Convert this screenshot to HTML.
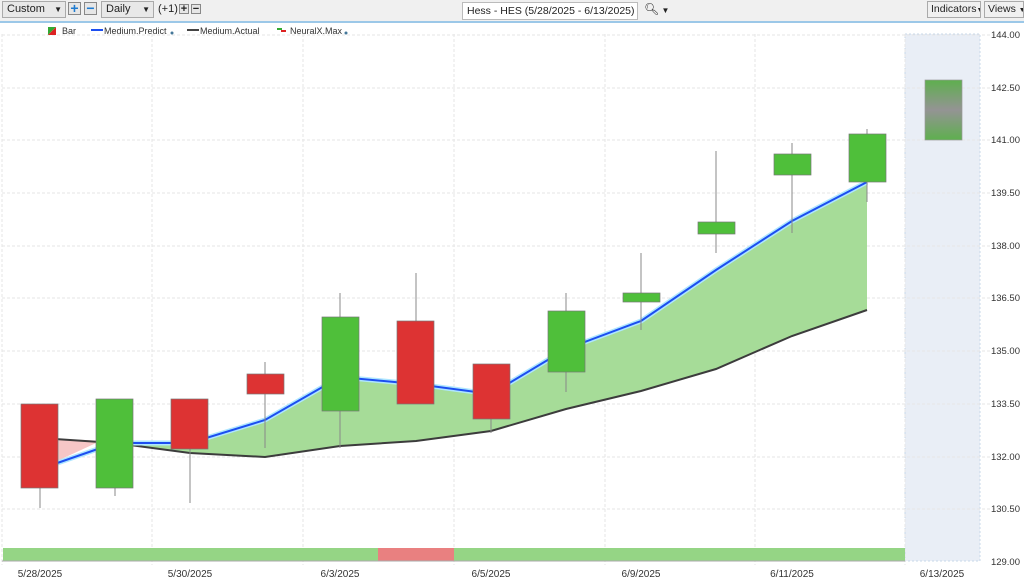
<!DOCTYPE html>
<html><head><meta charset="utf-8"><style>
body{margin:0;width:1024px;height:579px;overflow:hidden;background:#fff;font-family:"Liberation Sans",sans-serif;}
.tb{position:absolute;left:0;top:0;width:1024px;height:21px;background:#f0f0f0;border-bottom:2px solid #9cc8e8;font-size:11px;color:#222;white-space:nowrap}
.box{position:absolute;top:1px;height:17px;border:1px solid #aaa;background:#e8e8e8;line-height:15px;padding-left:4px;box-sizing:border-box;white-space:nowrap;overflow:hidden}
.sq{position:absolute;top:2px;width:13px;height:13px;border:1px solid #888;background:#e6e6e6;box-sizing:border-box;text-align:center;line-height:11px;font-weight:bold}
</style></head><body>
<div class="tb">
<div class="box" style="left:2px;width:64px">Custom<span style="position:absolute;right:3px;font-size:8px">▼</span></div>
<div class="sq" style="left:68px;color:#1e7bd0;font-size:14px">+</div>
<div class="sq" style="left:84px;color:#1e7bd0;font-size:14px">−</div>
<div class="box" style="left:101px;width:53px">Daily<span style="position:absolute;right:3px;font-size:8px">▼</span></div>
<div style="position:absolute;left:158px;top:3px">(+1)</div>
<div class="sq" style="left:179px;width:10px;height:10px;top:4px;line-height:8px;font-size:11px">+</div>
<div class="sq" style="left:191px;width:10px;height:10px;top:4px;line-height:8px;font-size:11px">−</div>
<div style="position:absolute;left:462px;top:2px;width:176px;height:18px;background:#fff;border:1px solid #bbb;box-sizing:border-box;line-height:16px;padding-left:4px;font-size:10.5px;white-space:nowrap;overflow:hidden">Hess - HES (5/28/2025 - 6/13/2025)</div>
<div style="position:absolute;left:644px;top:2px;font-size:12px">🔍︎<span style="font-size:8px"> ▼</span></div>
<div class="box" style="left:927px;width:54px;background:#f0f0f0;padding-left:3px;font-size:10.5px">Indicators<span style="font-size:7px">▼</span></div>
<div class="box" style="left:984px;width:40px;background:#f0f0f0;padding-left:3px;font-size:10.5px">Views <span style="font-size:7px">▼</span></div>
</div>
<svg width="1024" height="556" style="position:absolute;left:0;top:23px" viewBox="0 23 1024 556" font-family="Liberation Sans" font-size="9.5">
<rect x="905" y="34" width="75" height="527" fill="#e9eef6" stroke="#c8d8ea" stroke-dasharray="2,2"/>
<g stroke="#e6e6e6" stroke-dasharray="3,2">
<line x1="2" y1="35" x2="1007" y2="35"/><line x1="2" y1="88" x2="1007" y2="88"/><line x1="2" y1="140" x2="1007" y2="140"/><line x1="2" y1="193" x2="1007" y2="193"/><line x1="2" y1="246" x2="1007" y2="246"/><line x1="2" y1="298" x2="1007" y2="298"/><line x1="2" y1="351" x2="1007" y2="351"/><line x1="2" y1="404" x2="1007" y2="404"/><line x1="2" y1="457" x2="1007" y2="457"/><line x1="2" y1="509" x2="1007" y2="509"/>
<line x1="2" y1="34" x2="2" y2="565"/><line x1="152" y1="34" x2="152" y2="565"/><line x1="303" y1="34" x2="303" y2="565"/><line x1="454" y1="34" x2="454" y2="565"/><line x1="605" y1="34" x2="605" y2="565"/><line x1="755" y1="34" x2="755" y2="565"/><line x1="905" y1="34" x2="905" y2="565"/>
</g>
<polygon points="40,469 40,438 101,440.8" fill="#f6c6c6"/>
<polygon points="101,440.8 115,443 190,443 265,420 340,377 416,384 491,394 566,349 641,321 716,270 792,221 867,182 867,310 792,336 716,369 641,391 566,409 491,431 416,441 340,446 265,457 190,453 115,443" fill="#a6dc98"/>
<polyline points="40,438 115,443 190,453 265,457 340,446 416,441 491,431 566,409 641,391 716,369 792,336 867,310" fill="none" stroke="#3c3c3c" stroke-width="2"/>
<polyline points="40,469 115,443 190,443 265,420 340,377 416,384 491,394 566,349 641,321 716,270 792,221 867,182" fill="none" stroke="#aee6ff" stroke-width="5"/>
<polyline points="40,469 115,443 190,443 265,420 340,377 416,384 491,394 566,349 641,321 716,270 792,221 867,182" fill="none" stroke="#1c4ef0" stroke-width="2"/>
<g stroke="#888" stroke-width="1">
<line x1="40" y1="404" x2="40" y2="508"/><line x1="115" y1="399" x2="115" y2="496"/><line x1="190" y1="399" x2="190" y2="503"/><line x1="265" y1="362" x2="265" y2="448"/><line x1="340" y1="293" x2="340" y2="448"/><line x1="416" y1="273" x2="416" y2="404"/><line x1="491" y1="364" x2="491" y2="433"/><line x1="566" y1="293" x2="566" y2="392"/><line x1="641" y1="253" x2="641" y2="330"/><line x1="716" y1="151" x2="716" y2="253"/><line x1="792" y1="143" x2="792" y2="233"/><line x1="867" y1="129" x2="867" y2="202"/>
</g>
<g stroke="#777" stroke-width="0.7">
<rect x="21" y="404" width="37" height="84" fill="#dd3333"/>
<rect x="96" y="399" width="37" height="89" fill="#4fbf3a"/>
<rect x="171" y="399" width="37" height="50" fill="#dd3333"/>
<rect x="247" y="374" width="37" height="20" fill="#dd3333"/>
<rect x="322" y="317" width="37" height="94" fill="#4fbf3a"/>
<rect x="397" y="321" width="37" height="83" fill="#dd3333"/>
<rect x="473" y="364" width="37" height="55" fill="#dd3333"/>
<rect x="548" y="311" width="37" height="61" fill="#4fbf3a"/>
<rect x="623" y="293" width="37" height="9" fill="#4fbf3a"/>
<rect x="698" y="222" width="37" height="12" fill="#4fbf3a"/>
<rect x="774" y="154" width="37" height="21" fill="#4fbf3a"/>
<rect x="849" y="134" width="37" height="48" fill="#4fbf3a"/>
</g>
<defs><linearGradient id="g" x1="0" y1="0" x2="0" y2="1"><stop offset="0" stop-color="#5eaf4e"/><stop offset="0.5" stop-color="#949494"/><stop offset="1" stop-color="#5eaf4e"/></linearGradient></defs>
<rect x="925" y="80" width="37" height="60" fill="url(#g)" stroke="#999" stroke-width="0.7"/>
<rect x="3" y="548" width="375" height="13" fill="#95d585"/>
<rect x="378" y="548" width="76" height="13" fill="#e98080"/>
<rect x="454" y="548" width="451" height="13" fill="#95d585"/>
<line x1="2" y1="561" x2="905" y2="561" stroke="#aaa"/>
<g fill="#333" text-anchor="middle" font-size="10">
<text x="40" y="577">5/28/2025</text><text x="190" y="577">5/30/2025</text><text x="340" y="577">6/3/2025</text><text x="491" y="577">6/5/2025</text><text x="641" y="577">6/9/2025</text><text x="792" y="577">6/11/2025</text><text x="942" y="577">6/13/2025</text>
</g>
<g fill="#333" text-anchor="end">
<text x="1020" y="38">144.00</text><text x="1020" y="91">142.50</text><text x="1020" y="143">141.00</text><text x="1020" y="196">139.50</text><text x="1020" y="249">138.00</text><text x="1020" y="301">136.50</text><text x="1020" y="354">135.00</text><text x="1020" y="407">133.50</text><text x="1020" y="460">132.00</text><text x="1020" y="512">130.50</text><text x="1020" y="565">129.00</text>
</g>
<g font-size="9">
<polygon points="48,27 56,27 48,35" fill="#3a3"/><polygon points="56,27 56,35 48,35" fill="#d22"/>
<text x="62" y="34" fill="#333">Bar</text>
<rect x="91" y="29" width="12" height="2" fill="#1c4ef0"/><text x="104" y="34" fill="#333">Medium.Predict</text><circle cx="172" cy="33" r="1.5" fill="#479"/>
<rect x="187" y="29" width="12" height="2" fill="#444"/><text x="200" y="34" fill="#333">Medium.Actual</text>
<rect x="277" y="28" width="5" height="2" fill="#3a3"/><rect x="281" y="30" width="5" height="2" fill="#d22"/><text x="290" y="34" fill="#333">NeuralX.Max</text><circle cx="346" cy="33" r="1.5" fill="#479"/>
</g>
</svg>
</body></html>
